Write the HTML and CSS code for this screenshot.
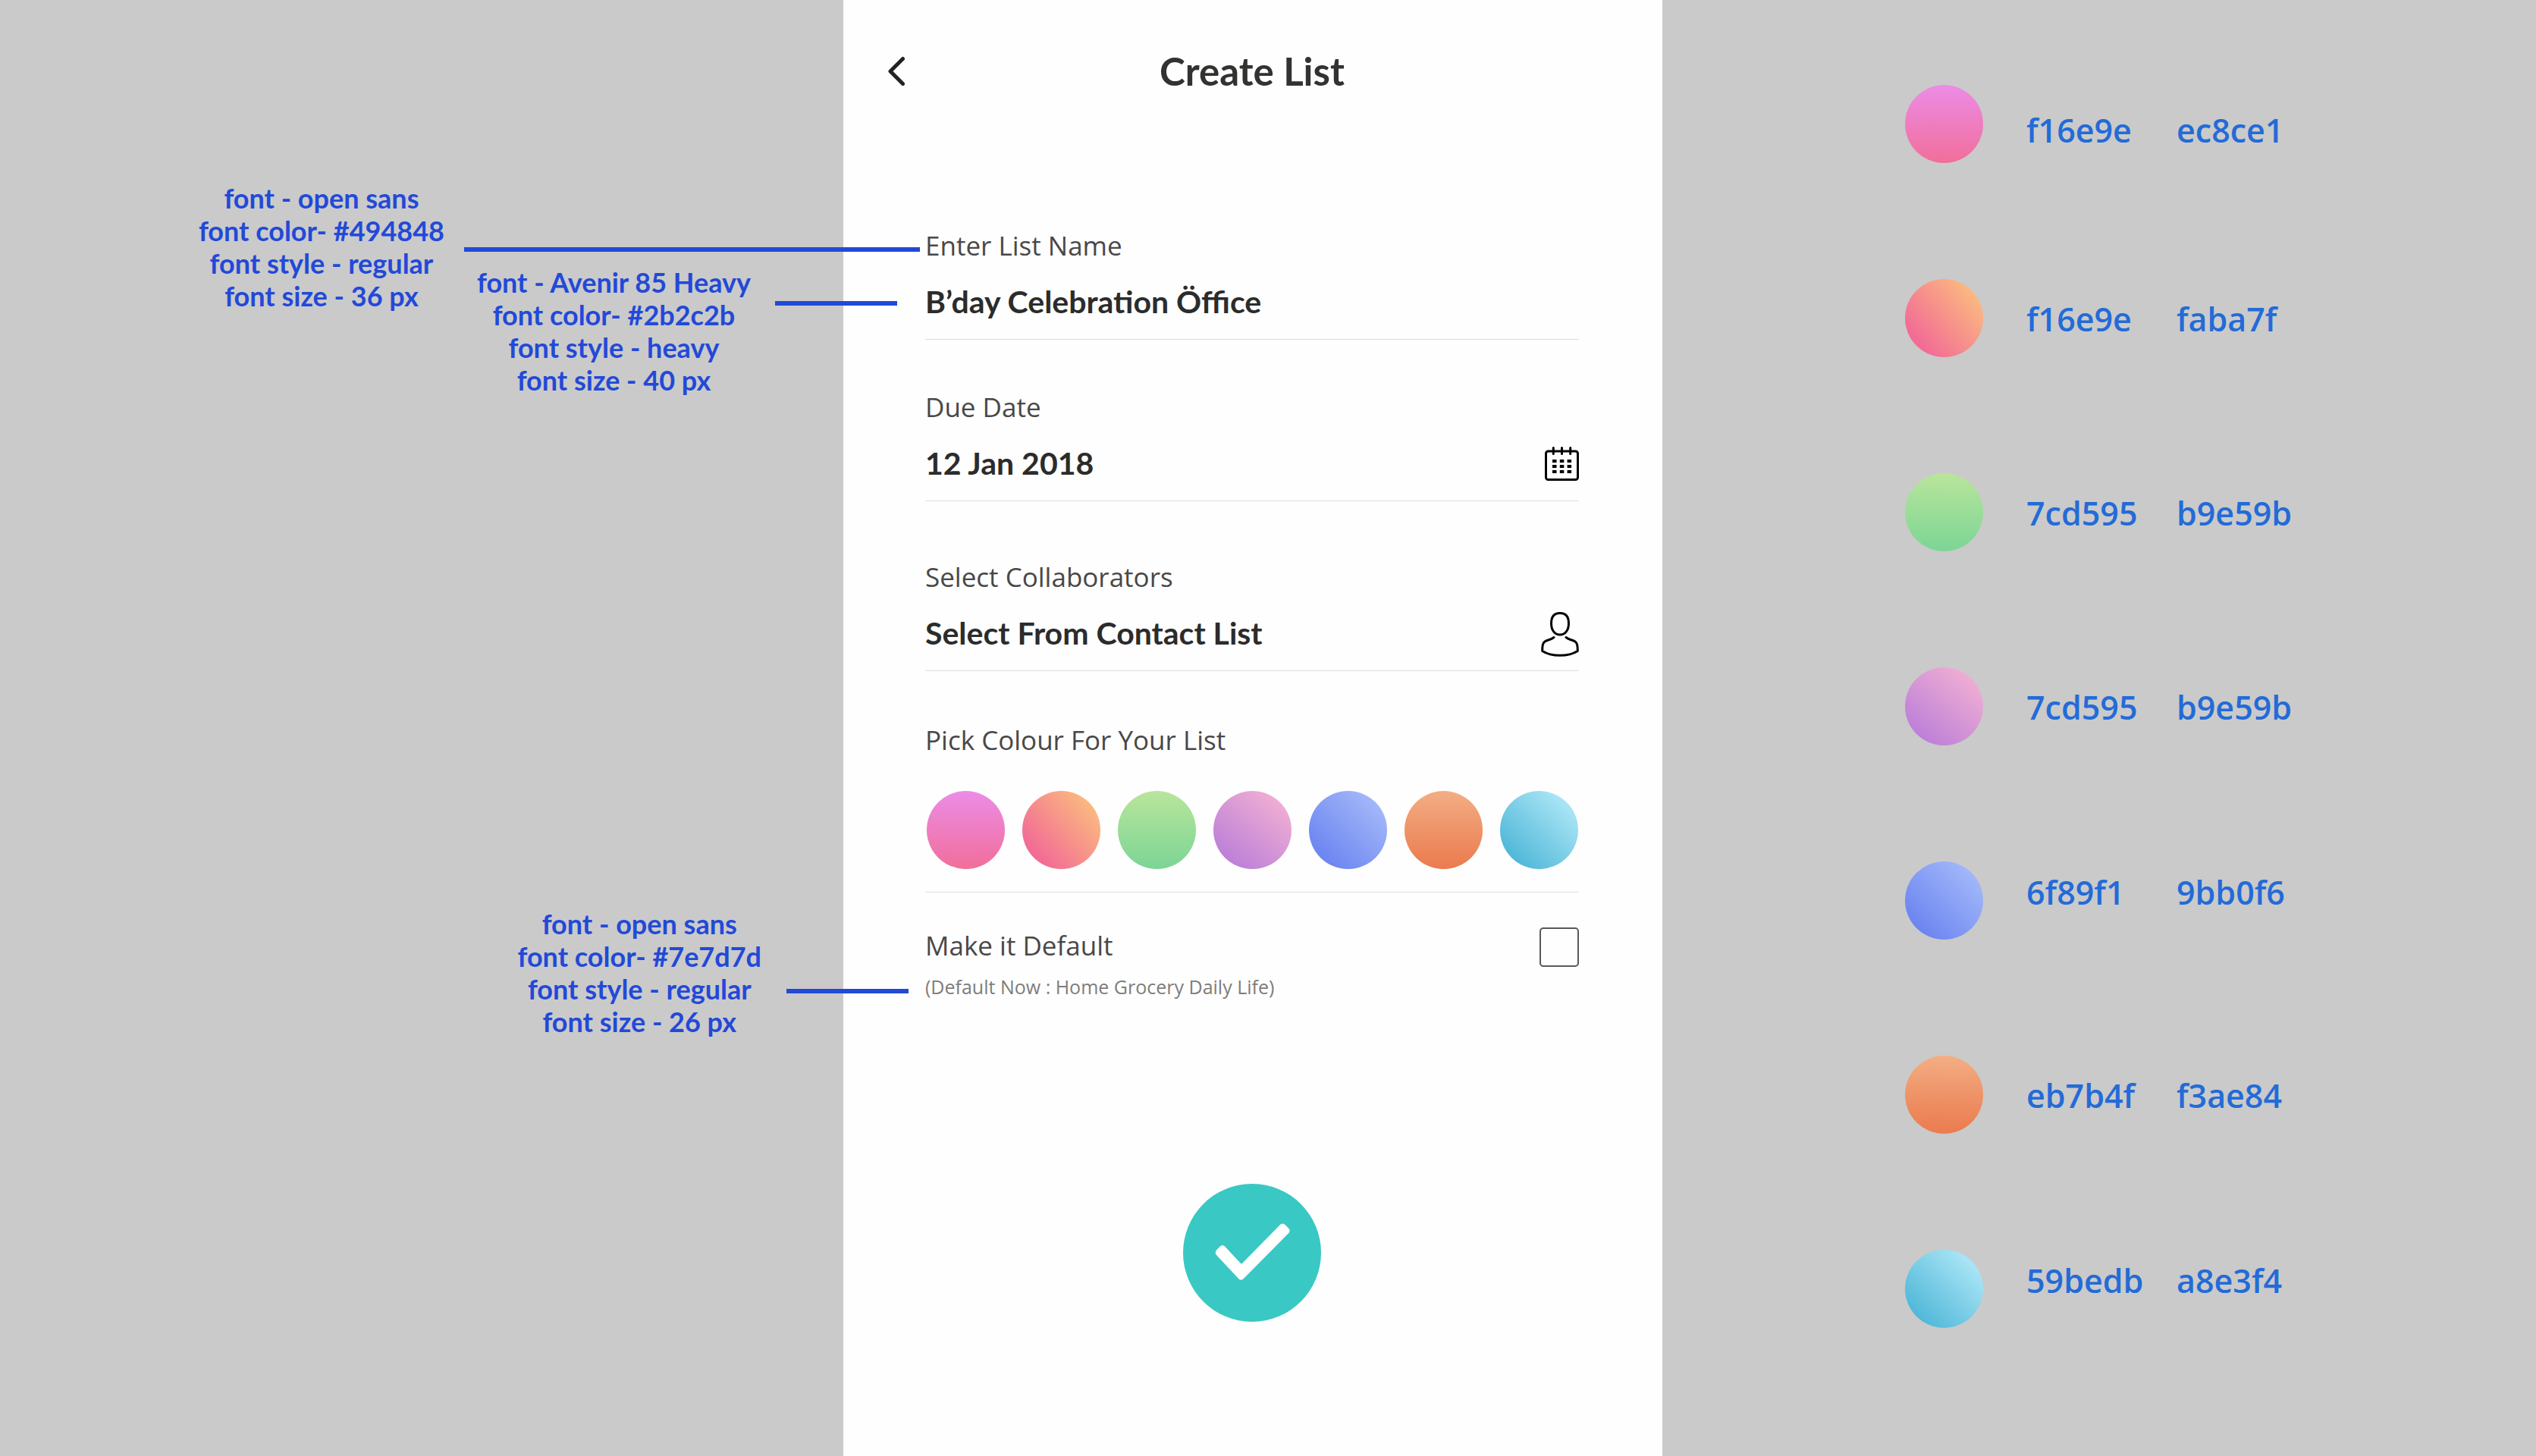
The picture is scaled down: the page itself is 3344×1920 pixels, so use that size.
FILE: index.html
```html
<!DOCTYPE html>
<html lang="en">
<head>
<meta charset="utf-8">
<meta name="viewport" content="width=device-width, initial-scale=1">
<title>Create List</title>
<link rel="stylesheet" href="styles.css">
</head>
<body>
<div class="board">
  <aside class="notes">
    <div class="notes-row">
      <p class="note">font - open sans<br>font color- #494848<br>font style - regular<br>font size - 36 px</p>
      <p class="note note-lower">font - Avenir 85 Heavy<br>font color- #2b2c2b<br>font style - heavy<br>font size - 40 px</p>
    </div>
    <p class="note note-hint">font - open sans<br>font color- #7e7d7d<br>font style - regular<br>font size - 26 px</p>
    <span class="leader leader-label"></span>
    <span class="leader leader-value"></span>
    <span class="leader leader-hint"></span>
  </aside>

  <main class="screen">
    <header class="bar">
      <button class="back" type="button" aria-label="Back">
        <svg width="24" height="40" viewBox="0 0 24 40" fill="none" stroke="#222" stroke-width="5" stroke-linecap="round" stroke-linejoin="round"><path d="M20.500 3.500 4 20l16.500 16.500"/></svg>
      </button>
      <h1 class="title">Create List</h1>
    </header>

    <form class="form">
      <div class="field">
        <label class="label" for="list-name">Enter List Name</label>
        <div class="row"><input class="value" id="list-name" type="text" value="B’day Celebration Öffice"></div>
      </div>

      <div class="field">
        <label class="label" for="due-date">Due Date</label>
        <div class="row">
          <input class="value" id="due-date" type="text" value="12 Jan 2018">
          <svg class="icon" width="45" height="45" viewBox="0 0 45 45" aria-hidden="true">
            <g fill="none" stroke="#000" stroke-width="3"><rect x="1.500" y="6" width="42" height="37.500" rx="3"/><path stroke-linecap="round" d="M11.300 1.500v8M22.500 1.500v8M33.700 1.500v8"/></g>
            <path d="M10 17h5.500v4H10zM19.800 17h5.500v4h-5.500zM29.600 17h5.500v4h-5.500zM10 24h5.500v4H10zM19.800 24h5.500v4h-5.500zM29.600 24h5.500v4h-5.500zM10 31h5.500v4H10zM19.800 31h5.500v4h-5.500zM29.600 31h5.500v4h-5.500z"/>
          </svg>
        </div>
      </div>

      <div class="field">
        <label class="label" for="people">Select Collaborators</label>
        <div class="row">
          <button class="value" id="people" type="button">Select From Contact List</button>
          <svg class="icon" width="50" height="62" viewBox="0 -3 50 62" fill="none" stroke="#000" stroke-width="3" stroke-linecap="round" aria-hidden="true">
            <path d="M25 1.500c7.500 0 11.500 4.500 11.500 13.500S32 30 25 30 13.500 24 13.500 15 17.500 1.500 25 1.500z"/>
            <path d="M17 33.500c-4 3-8.500 3.500-12 5.500-3 2-3.500 6-3.200 12.500C8 55.500 16 57.300 25 57.300s17-1.800 23.200-5.800c.3-6.500-.2-10.500-3.200-12.500-3.500-2-8-2.500-12-5.500"/>
          </svg>
        </div>
      </div>

      <fieldset class="field colours">
        <legend class="label">Pick Colour For Your List</legend>
        <div class="swatches">
          <input class="swatch pink" type="radio" name="colour" aria-label="Pink">
          <input class="swatch peach" type="radio" name="colour" aria-label="Peach">
          <input class="swatch green" type="radio" name="colour" aria-label="Green">
          <input class="swatch mauve" type="radio" name="colour" aria-label="Mauve">
          <input class="swatch blue" type="radio" name="colour" aria-label="Blue">
          <input class="swatch orange" type="radio" name="colour" aria-label="Orange">
          <input class="swatch aqua" type="radio" name="colour" aria-label="Aqua">
        </div>
      </fieldset>

      <div class="default">
        <div class="default-text">
          <label class="label" for="default">Make it Default</label>
          <p class="hint">(Default Now : Home Grocery Daily Life)</p>
        </div>
        <input class="box" id="default" type="checkbox">
      </div>

      <button class="submit" type="submit" aria-label="Save list">
        <svg width="182" height="182" viewBox="0 0 182 182" fill="#fff"><path d="M44 87.500 49 82.500Q52 80 55 82.500L75.500 104.500Q77 106.500 78.500 104.500L128 54Q131.300 51 134.500 54L139.300 59Q142 62 139.300 65L79.500 125.500Q76.300 128 73.500 125.500L44 94Q41.500 90.500 44 87.500z"/></svg>
      </button>
    </form>
  </main>

  <aside class="palette">
    <ul class="codes">
      <li class="code-row low"><span class="swatch pink"></span><span class="code">f16e9e</span><span class="code">ec8ce1</span></li>
      <li class="code-row"><span class="swatch peach"></span><span class="code">f16e9e</span><span class="code">faba7f</span></li>
      <li class="code-row"><span class="swatch green"></span><span class="code">7cd595</span><span class="code">b9e59b</span></li>
      <li class="code-row"><span class="swatch mauve"></span><span class="code">7cd595</span><span class="code">b9e59b</span></li>
      <li class="code-row high"><span class="swatch blue"></span><span class="code">6f89f1</span><span class="code">9bb0f6</span></li>
      <li class="code-row"><span class="swatch orange"></span><span class="code">eb7b4f</span><span class="code">f3ae84</span></li>
      <li class="code-row high"><span class="swatch aqua"></span><span class="code">59bedb</span><span class="code">a8e3f4</span></li>
    </ul>
  </aside>
</div>
</body>
</html>
```
FILE: styles.css
```css
* { box-sizing: border-box; }

body {
  margin: 0;
  background: #cacaca;
  font-family: Lato, "Liberation Sans", sans-serif;
}

h1, p, ul { margin: 0; padding: 0; }

button, input { font: inherit; color: inherit; }

.board {
  display: grid;
  grid-template-columns: minmax(0, 1112fr) 1080px minmax(0, 1152fr);
  min-height: 100vh;
}

/* Annotations */
.notes {
  position: relative;
  z-index: 1;
  display: flex;
  flex-direction: column;
  align-items: flex-end;
  gap: 674px;
  padding-top: 240px;
}

.notes-row {
  display: flex;
  align-items: flex-start;
  gap: 43px;
  padding-right: 122px;
}

.note {
  color: #2249d8;
  font-size: 36px;
  font-weight: 700;
  line-height: 43px;
  text-align: center;
  white-space: nowrap;
}

.note-lower { margin-top: 111px; }

.note-hint { margin-right: 108px; }

.leader {
  position: absolute;
  height: 6px;
  background: #2249d8;
}

.leader-label { top: 326px; right: -101px; width: 601px; }
.leader-value { top: 397px; right: -71px; width: 161px; }
.leader-hint { top: 1304px; right: -86px; width: 161px; }

/* Phone screen */
.screen {
  background: #fefefe;
  padding: 64px 110px 80px 108px;
}

.bar {
  display: grid;
  grid-template-columns: 1fr auto 1fr;
  align-items: center;
  margin-bottom: 176px;
}

.back {
  justify-self: start;
  display: flex;
  margin-left: -50px;
  padding: 0;
  border: 0;
  background: none;
}

.title {
  color: #323231;
  font-size: 51px;
  font-weight: 700;
  line-height: 60px;
}

.form {
  display: flex;
  flex-direction: column;
}

.field {
  display: flex;
  flex-direction: column;
  gap: 20px;
  margin: 0 0 65px;
  padding: 0 0 19px;
  border: 0;
  border-bottom: 1px solid #dcdcdc;
}

.field:nth-child(2) { margin-bottom: 76px; }

.label {
  padding: 0;
  color: #494848;
  font-family: "Open Sans", sans-serif;
  font-size: 35px;
  line-height: 48px;
}

.row {
  display: flex;
  align-items: center;
  height: 60px;
}

.value {
  flex: 1;
  min-width: 0;
  height: 60px;
  padding: 0;
  border: 0;
  background: none;
  color: #2b2c2b;
  font-size: 41px;
  font-weight: 700;
  line-height: 60px;
  text-align: left;
}

.icon { flex: none; }

.field.colours {
  margin-top: 2px;
  margin-bottom: 46px;
  padding-bottom: 30px;
}

.swatches {
  display: flex;
  justify-content: space-between;
  padding: 43px 1px 0 2px;
}

.swatch {
  appearance: none;
  flex: none;
  width: 103px;
  height: 103px;
  margin: 0;
  border-radius: 50%;
}

.pink { background: linear-gradient(#ec8ce6, #f16e9a); }
.peach { background: linear-gradient(230deg, #fbb980 14%, #f26c95 82%); }
.green { background: linear-gradient(#b9e59b, #7cd595); }
.mauve { background: linear-gradient(220deg, #f2b0d3 10%, #bd80d8 85%); }
.blue { background: linear-gradient(225deg, #a5bafa 10%, #6c85f0 85%); }
.orange { background: linear-gradient(#f3ae84, #ee8e63 60%, #eb7b4f); }
.aqua { background: linear-gradient(225deg, #b0e8f8 10%, #4db6d7 88%); }

.default {
  display: flex;
  justify-content: space-between;
  align-items: flex-start;
}

.default-text {
  display: flex;
  flex-direction: column;
  gap: 12px;
}

.hint {
  color: #7e7d7d;
  font-family: "Open Sans", sans-serif;
  font-size: 25px;
  line-height: 36px;
}

.box {
  appearance: none;
  width: 52px;
  height: 52px;
  margin: 0;
  border: 2px solid #5a5959;
  border-radius: 5px;
}

.submit {
  align-self: center;
  display: flex;
  width: 182px;
  height: 182px;
  margin-top: 242px;
  padding: 0;
  border: 0;
  border-radius: 50%;
  background: #3ac8c4;
}

/* Colour codes */
.palette { padding: 112px 0 0 320px; }

.codes {
  display: flex;
  flex-direction: column;
  gap: 153px;
  list-style: none;
}

.code-row {
  display: grid;
  grid-template-columns: 103px 141px 160px;
  column-gap: 57px;
  align-items: center;
  height: 103px;
}

.code {
  padding-top: 2px;
  color: #236bd8;
  font-family: "Open Sans", sans-serif;
  font-size: 43px;
  font-weight: 600;
  line-height: 60px;
}

.low .code { padding-top: 16px; }
.high .code { padding-bottom: 24px; }
```
